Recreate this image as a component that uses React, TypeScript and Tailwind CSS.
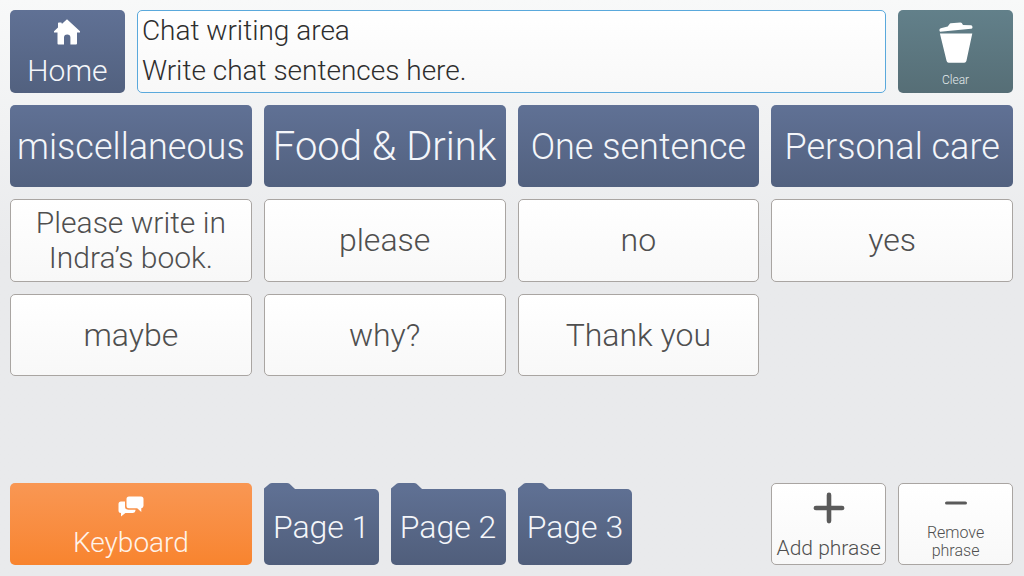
import type { ReactNode } from 'react';
import { clsx } from 'clsx';

const tones = {
  blue: 'bg-linear-to-b from-[#607195] to-[#52617f] text-[#f4f6fa]',
  teal: 'bg-linear-to-b from-[#62808a] to-[#566e76] text-[#e4eaec]',
  orange: 'bg-linear-to-b from-[#f99753] to-[#f8842e] text-[#fff3ea]',
  white: 'border border-[#a9a5a2] bg-linear-to-b from-white to-[#f8f8f8] text-[#4f4f4f]',
};

type CellProps = {
  tone: keyof typeof tones;
  className?: string;
  children: ReactNode;
};

function Cell({ tone, className, children }: CellProps) {
  return (
    <button
      type="button"
      className={clsx('flex flex-col items-center overflow-hidden rounded-[5px] text-center', tones[tone], className)}
    >
      {children}
    </button>
  );
}

function HomeIcon() {
  return (
    <svg viewBox="0 0 26 26" className="size-[26px]" fill="white" aria-hidden="true">
      <path d="M13 0.2 L26 12.2 V13.5 H23 V24.6 Q23 25.5 22 25.5 H16.4 V18.6 Q16.4 15.4 13.2 15.4 Q10 15.4 10 18.6 V25.5 H4.4 Q3.5 25.5 3.5 24.6 V13.5 H0 V12.2 L4 8.6 V4.2 Q4 3.4 4.8 3.4 H7 Q7.8 3.4 7.8 4.2 V5 Z" />
    </svg>
  );
}

function TrashIcon() {
  return (
    <svg viewBox="0 0 34 42" className="h-[42px] w-[34px]" fill="white" aria-hidden="true">
      <path d="M0.4 8.4 Q0.2 6.7 1.8 6.2 L8.7 4.4 L10.4 2.2 Q10.9 1.5 11.8 1.3 L21.3 0.5 Q22.3 0.5 22.8 1.1 L24 2.9 L32.2 3.2 Q33.6 3.4 33.5 5.4 Q33.4 6.6 32 6.8 L1 9.8 Z" />
      <path d="M0.9 11.4 H33.3 L27.4 39 Q26.9 40.8 25.2 40.8 H9.7 Q8 40.8 7.6 39 Z" />
    </svg>
  );
}

function ChatIcon() {
  return (
    <svg viewBox="0 0 26 21" className="h-[21px] w-[26px]" fill="white" aria-hidden="true">
      <path d="M11 0.5 H23 Q25.5 0.5 25.5 3 V9.8 Q25.5 12.2 23.3 12.3 V16 L19.2 12.3 H11 Q8.5 12.3 8.5 9.8 V3 Q8.5 0.5 11 0.5 Z" />
      <path d="M3 5.5 H7 V10.4 Q7 13.7 10.4 13.7 H17.5 V14.6 Q17.3 17 15 17 H7.4 L3 20.6 V17 Q0.5 17 0.5 14.5 V8 Q0.5 5.5 3 5.5 Z" />
    </svg>
  );
}

function PlusIcon() {
  return (
    <svg viewBox="0 0 32 32" className="size-8" stroke="#5a5a5a" strokeWidth="4.6" strokeLinecap="round" aria-hidden="true">
      <path d="M16 2.9 V29.1 M2.9 16 H29.1" />
    </svg>
  );
}

function MinusIcon() {
  return (
    <svg viewBox="0 0 24 6" className="h-[6px] w-6" stroke="#5a5a5a" strokeWidth="3.2" strokeLinecap="round" aria-hidden="true">
      <path d="M2.6 3 H21.4" />
    </svg>
  );
}

function FolderButton({ label }: { label: string }) {
  return (
    <button type="button" className="row-start-6 flex flex-col text-[32px] leading-9 text-[#f4f6fa]">
      <svg viewBox="0 0 32 6" className="h-[6px] w-8" fill="#5f7093" aria-hidden="true">
        <path d="M0 6 V5.4 L5.6 0.8 Q6.6 0 8 0 H23 Q24.6 0 25.5 0.8 L31 6 Z" />
      </svg>
      <span className="flex w-full flex-1 items-center justify-center rounded-b-[5px] rounded-tr-[5px] bg-linear-to-b from-[#5f7093] to-[#505e7b]">
        {label}
      </span>
    </button>
  );
}

const categories = [
  { label: 'miscellaneous', size: 'text-[36px]' },
  { label: 'Food & Drink', size: 'text-[40px]' },
  { label: 'One sentence', size: 'text-[36px]' },
  { label: 'Personal care', size: 'text-[36px]' },
];

const phrases = ['Please write in Indra’s book.', 'please', 'no', 'yes', 'maybe', 'why?', 'Thank you'];

export default function App() {
  return (
    <main className="grid min-h-screen grid-cols-8 grid-rows-6 gap-3 bg-linear-to-b from-[#f8f9f9] via-[#e9eaec] via-45% to-[#e9eaec] pt-[10px] pr-[11px] pb-[11px] pl-[10px] font-['Roboto',sans-serif] font-light">
      <Cell tone="blue" className="pt-[9px] text-[30px] leading-9">
        <HomeIcon />
        <span className="mt-2">Home</span>
      </Cell>
      <textarea
        aria-label="Chat writing area"
        defaultValue={'Chat writing area\nWrite chat sentences here.'}
        className="col-span-6 resize-none overflow-hidden rounded-[5px] border border-[#5aa9dc] bg-linear-to-b from-white to-[#f8f8f8] px-1 text-[28px] leading-10 text-[#2e2e2e] outline-none"
      />
      <Cell tone="teal" className="pt-3 text-[12px] leading-4">
        <TrashIcon />
        <span className="mt-2">Clear</span>
      </Cell>

      {categories.map(({ label, size }) => (
        <Cell key={label} tone="blue" className={clsx('col-span-2 justify-center whitespace-nowrap pt-[2px] leading-10', size)}>
          {label}
        </Cell>
      ))}

      {phrases.map((phrase) => (
        <Cell
          key={phrase}
          tone="white"
          className={clsx('col-span-2 justify-center px-5', phrase.length > 12 ? 'text-[30px] leading-[35px]' : 'text-[32px] leading-9')}
        >
          {phrase}
        </Cell>
      ))}

      <Cell tone="orange" className="col-span-2 col-start-1 row-start-6 pt-[13px] text-[28px] leading-9">
        <ChatIcon />
        <span className="mt-2">Keyboard</span>
      </Cell>
      <FolderButton label="Page 1" />
      <FolderButton label="Page 2" />
      <FolderButton label="Page 3" />
      <Cell tone="white" className="col-start-7 row-start-6 pt-2 text-[21px] leading-6">
        <PlusIcon />
        <span className="mt-3 whitespace-nowrap">Add phrase</span>
      </Cell>
      <Cell tone="white" className="col-start-8 row-start-6 px-4 pt-4 text-[16px] leading-[18px]">
        <MinusIcon />
        <span className="mt-[18px]">Remove phrase</span>
      </Cell>
    </main>
  );
}
